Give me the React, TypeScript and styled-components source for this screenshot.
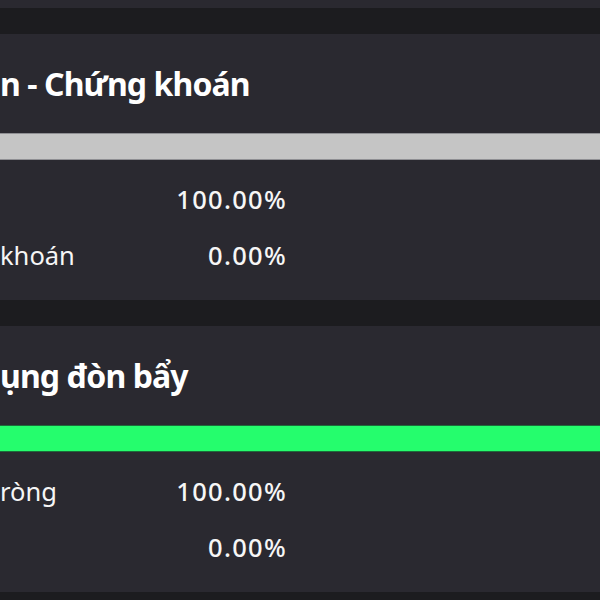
import React from "react";
import styled, { createGlobalStyle } from "styled-components";

const GlobalStyle = createGlobalStyle`
  html, body {
    margin: 0;
    padding: 0;
    background: #1c1c1f;
    overflow: hidden;
  }
  body {
    font-family: "Noto Sans", "Open Sans", sans-serif;
    color: #ffffff;
  }
`;

const Page = styled.div`
  display: flex;
  flex-direction: column;
  gap: 26px;
  width: 600px;
  height: 600px;
  overflow: hidden;
`;

const PanelStub = styled.div`
  height: 8px;
  background: #2a2930;
`;

const Panel = styled.section`
  display: flex;
  flex-direction: column;
  height: 266px;
  box-sizing: border-box;
  padding: 30px 0 17px;
  background: #2a2930;
`;

const Title = styled.h2`
  margin: 0 0 29px 0;
  height: 40px;
  line-height: 40px;
  font-size: 32px;
  font-weight: 700;
  letter-spacing: -0.9px;
  white-space: nowrap;
  color: #ffffff;
`;

const Bar = styled.div`
  display: flex;
  height: 27px;
  box-sizing: border-box;
  margin-bottom: 11px;
  background: #3a3940;
`;

const Segment = styled.div<{ $color: string; $edge: string }>`
  height: 100%;
  box-sizing: border-box;
  background: ${(p) => p.$color};
  border-top: 1px solid ${(p) => p.$edge};
  border-bottom: 1px solid ${(p) => p.$edge};
`;

const Rows = styled.div`
  display: flex;
  flex-direction: column;
  width: 287px;
`;

const Row = styled.div`
  display: flex;
  align-items: center;
  justify-content: space-between;
  height: 56px;
  font-size: 25.5px;
  font-weight: 500;
  color: #f6f6f6;
`;

const Label = styled.span`
  white-space: nowrap;
  font-weight: 400;
`;

const Value = styled.span`
  letter-spacing: 1.3px;
  white-space: nowrap;
`;

type Item = { label: string; value: number; color: string; edge: string };

type Section = { title: string; items: Item[] };

const sections: Section[] = [
  {
    title: "n - Chứng khoán",
    items: [
      { label: "", value: 100, color: "#c5c5c5", edge: "#8f8f93" },
      { label: "khoán", value: 0, color: "#4a90e2", edge: "#2c5a90" },
    ],
  },
  {
    title: "ụng đòn bẩy",
    items: [
      { label: "ròng", value: 100, color: "#25fd6d", edge: "#1d6b3b" },
      { label: "", value: 0, color: "#ff4d4f", edge: "#8a2a2b" },
    ],
  },
];

export default function App() {
  return (
    <>
      <GlobalStyle />
      <Page>
        <PanelStub />
        {sections.map((s) => (
          <Panel key={s.title}>
            <Title>{s.title}</Title>
            <Bar>
              {s.items
                .filter((it) => it.value > 0)
                .map((it, i) => (
                  <Segment
                    key={i}
                    $color={it.color}
                    $edge={it.edge}
                    style={{ width: `${it.value}%` }}
                  />
                ))}
            </Bar>
            <Rows>
              {s.items.map((it, i) => (
                <Row key={i}>
                  <Label>{it.label}</Label>
                  <Value>{it.value.toFixed(2)}%</Value>
                </Row>
              ))}
            </Rows>
          </Panel>
        ))}
      </Page>
    </>
  );
}
